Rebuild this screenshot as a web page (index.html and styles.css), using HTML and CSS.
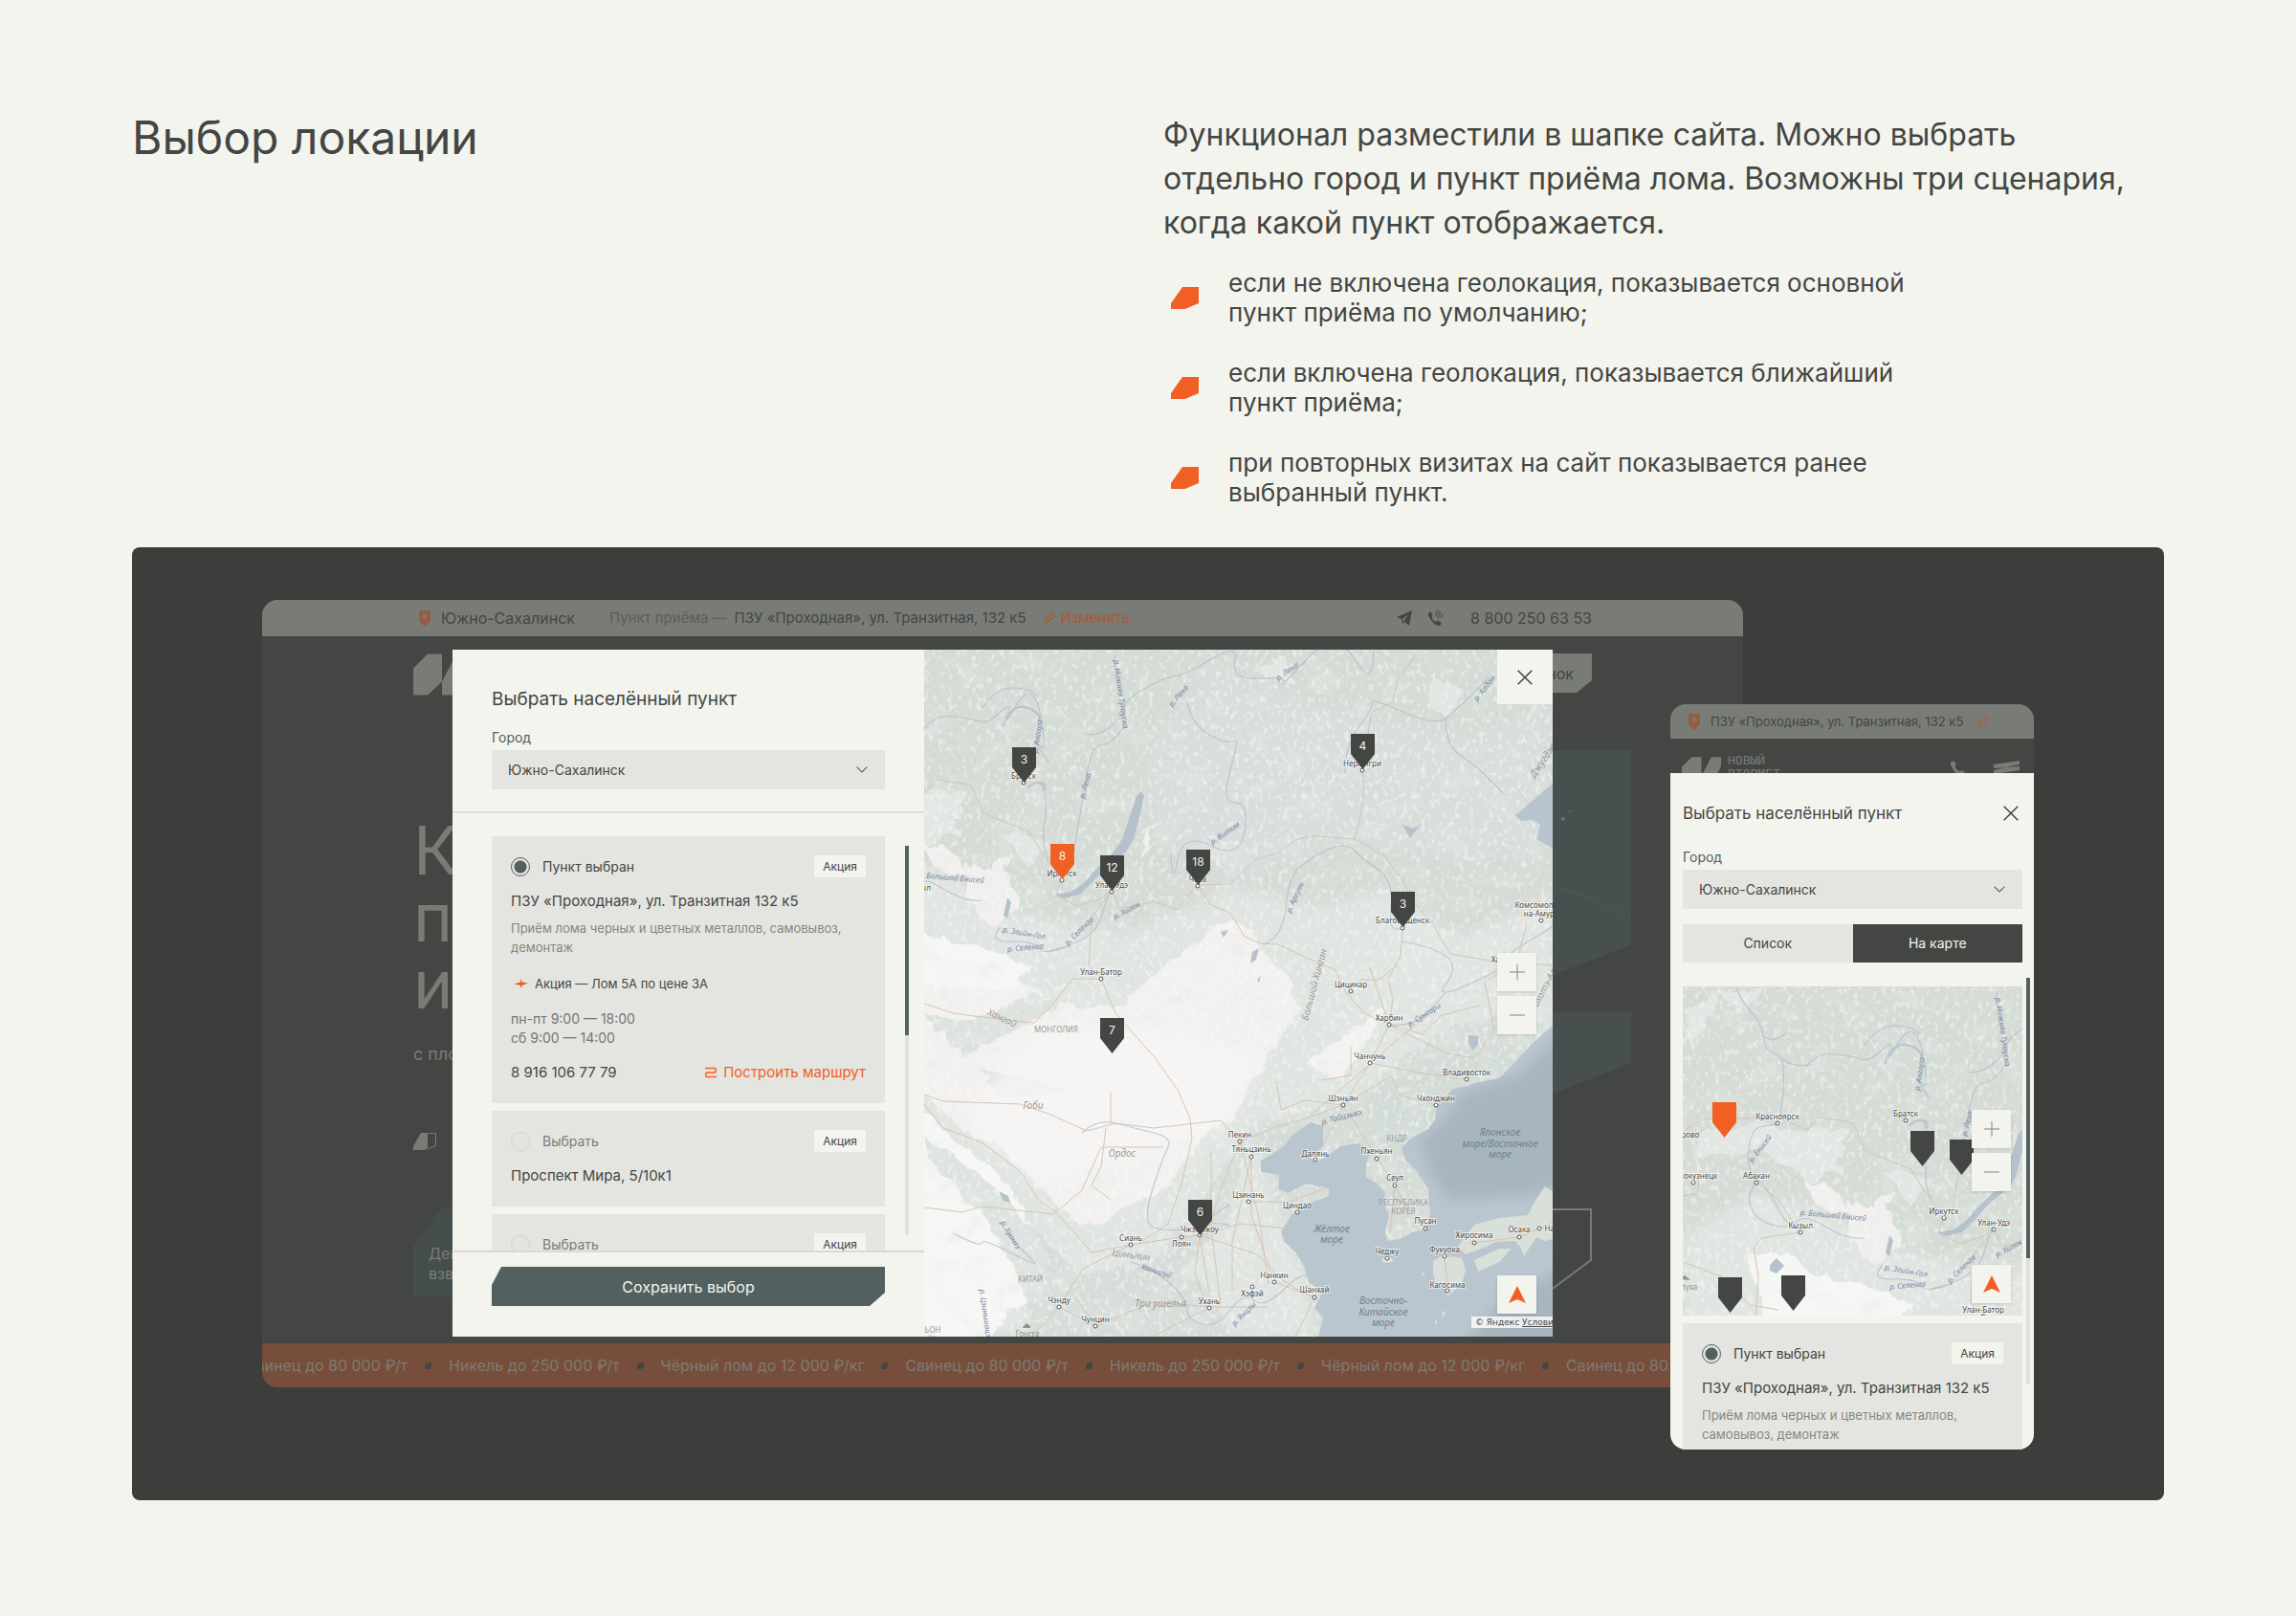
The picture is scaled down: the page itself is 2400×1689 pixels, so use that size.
FILE: index.html
```html
<!DOCTYPE html>
<html lang="ru">
<head>
<meta charset="utf-8">
<meta name="viewport" content="width=device-width, initial-scale=1">
<title>Выбор локации</title>
<link rel="stylesheet" href="styles.css">
</head>
<body>
<svg class="sprite" width="0" height="0" aria-hidden="true">
  <defs>
    <symbol id="i-geo" viewBox="0 0 12 17"><path fill-rule="evenodd" d="M2 0h8q2 0 2 2v9L6 17 0 11V2q0-2 2-2zM4 4v4h4V4z" fill="currentColor"/></symbol>
    <symbol id="i-pencil" viewBox="0 0 12 12"><path d="M1.200 10.800l.4-3.200L8 1.200q.8-.8 1.600 0l1.200 1.200q.8.800 0 1.600l-6.400 6.400z" fill="none" stroke="currentColor" stroke-width="1.400"/></symbol>
    <symbol id="i-close" viewBox="0 0 16 16"><path d="M.7.7l14.600 14.600M15.300.7L.7 15.300" stroke="currentColor" stroke-width="1.500" fill="none"/></symbol>
    <symbol id="i-down" viewBox="0 0 12 7"><path d="M.6.6L6 6 11.400.6" stroke="currentColor" stroke-width="1.100" fill="none"/></symbol>
    <symbol id="i-plus" viewBox="0 0 16 16"><path d="M8 0v16M0 8h16" stroke="currentColor" fill="none"/></symbol>
    <symbol id="i-minus" viewBox="0 0 16 16"><path d="M0 8h16" stroke="currentColor" fill="none"/></symbol>
    <symbol id="i-locate" viewBox="0 0 18 18"><path d="M9 0l9 18-9-4-9 4z" fill="currentColor"/></symbol>
    <symbol id="i-bullet" viewBox="0 0 29 23"><path d="M12 0h17v17L14.500 23H0v-6z" fill="currentColor"/></symbol>
    <symbol id="i-pin" viewBox="0 0 25 37"><path d="M0 0h25v21L12.500 37 0 21z" fill="currentColor"/></symbol>
    <symbol id="i-handset" viewBox="0 0 16 16"><path d="M3 0l3 4-1.500 2.500q1.500 3 4.500 5L11.500 10l4 3-1.500 3Q9 17 4 11T0 2z" fill="currentColor"/></symbol>
    <symbol id="i-logo" viewBox="0 0 60 43"><path d="M15 0h15v29L15 43H0V15zM45 0h15v14L45 43H30V29z" fill="currentColor"/></symbol>

    <filter id="rough" filterUnits="userSpaceOnUse" x="-129" y="-1" width="790" height="724">
      <feTurbulence type="fractalNoise" baseFrequency=".2 .14" numOctaves="3" seed="7" result="n"/>
      <feColorMatrix in="n" type="matrix" values="0 0 0 0 .93  0 0 0 0 .95  0 0 0 0 .93  6 0 0 0 -3.300"/>
      <feComposite operator="in" in2="SourceGraphic"/>
    </filter>
    <filter id="shade" filterUnits="userSpaceOnUse" x="-129" y="-1" width="790" height="724">
      <feTurbulence type="fractalNoise" baseFrequency=".03 .04" numOctaves="5" seed="12" result="n"/>
      <feColorMatrix in="n" type="matrix" values="0 0 0 0 .78  0 0 0 0 .83  0 0 0 0 .80  0 4 0 0 -2.100"/>
      <feComposite operator="in" in2="SourceGraphic"/>
    </filter>
    <filter id="soft" x="-10%" y="-10%" width="120%" height="120%"><feGaussianBlur stdDeviation="7"/></filter>
    <filter id="edge" filterUnits="userSpaceOnUse" x="-129" y="-1" width="790" height="724">
      <feTurbulence type="fractalNoise" baseFrequency=".06" numOctaves="4" seed="3"/>
      <feDisplacementMap in="SourceGraphic" scale="14" xChannelSelector="R" yChannelSelector="G"/>
    </filter>
    <path id="sea-shape" d="M657 393L636 411 618 431 601 448 575 453 568 456 553 459 536 476 534 491 527 501 508 511 499 521 503 533 514 544 527 564 529 591 524 606 510 609 497 616 484 618 482 608 486 591 480 578 482 568 473 558 462 551 462 538 467 524 454 516 436 519 421 529 409 536 404 531 417 518 417 498 404 494 384 508 376 519 352 534 352 546 371 549 371 564 380 568 399 558 423 563 423 571 397 581 384 591 373 608 376 618 389 631 397 644 402 661 417 671 408 688 417 698 412 719H658V393z"/>
    <clipPath id="sea-clip"><use href="#sea-shape"/></clipPath>

    <g id="region">
      <rect x="-129" y="-1" width="787" height="720" fill="#d5dbd5"/>
      <g filter="url(#soft)">
        <path fill="#d9dedc" d="M300 20L420 60 560 90 657 60V210L560 220 420 200 330 240 240 190 230 110z"/>
        <path fill="#e0e5e2" d="M-129 260L-60 220 20 230 80 270 200 300 330 250 420 270 480 250 560 300 657 260 657 400 500 440 420 480 340 500 400 660 410 718-129 718z"/>
      </g>
      <g filter="url(#edge)">
        <path fill="#f3f1f0" d="M320 284L345 300 365 330 385 345 390 380 370 410 345 450 325 490 300 500 285 520 255 560 215 580 190 600 165 600 140 580 115 555 80 520 40 500-5 460-5 300 40 310 60 340 100 345 140 370 200 375 240 340 290 300z"/>
        <path fill="#f3f2f0" d="M486 372L440 400 400 432 432 450 466 404z"/>
        <path fill="#f6f6f5" d="M-5 480L40 520 90 560 118 610 134 640 120 680 90 690 70 719-5 719zM-60 280L-20 275 10 300 60 310 110 330 90 360-40 345z"/>
        <path fill="#f1efee" d="M40 220l50 15 10 35-30 20-25-30zM-5 195l40 20 10 25-30-10zM240 180l-6 30-8 8 2-20zM60 240l30-30-12 40z"/>
        <path fill="#e2e7e4" d="M5 145l40 5-10 30-40-20zM-110 150l60-10 60 15 30 40-40 5-50-30-70 10zM80 190l50 10-20 30zM340 20l40-10 10 30zM530 30l30 10-10 30-25-10zM-129 30l40-25-30 60zM-90 5l50-5-30 25zM490 290l50 0 20 40-30 30-30-20z"/>
        <path fill="#d3dbd5" opacity=".7" d="M480 440l60-40 70-20 40 10-50 60-60 20-10 40-40 20-30-20zM0 380l50 10 60-30 40 10-60 30-50 25zM0 510l60 40 50 50 60 60 60-10 70-90 40-60-20 90-60 70-60 40-50-20-30 40-20-60-30-60-60-60zM60 440l100 20-80 10zM120 660l120-20 60 30 20 50H110z"/>
      </g>
      <rect x="-129" y="-1" width="787" height="720" filter="url(#shade)" opacity=".4"/>
      <rect x="-129" y="-1" width="787" height="720" filter="url(#rough)" opacity=".5"/>
      <path fill="#f7f6f5" opacity=".8" filter="url(#soft)" d="M120 400l120 0 70 10 40 20-40 70-80 20-110 40-70-60 20-50z"/>

      <!-- seas and lakes -->
      <use href="#sea-shape" fill="#bac6cf"/>
      <g clip-path="url(#sea-clip)">
        <path fill="#a7b5be" filter="url(#soft)" d="M680 390L620 445 560 465 545 490 518 512 530 550 550 575 640 570 680 550zM680 640L600 685 560 730H680z"/>
      </g>
      <path fill="#b9c5ce" d="M657 140L640 154 618 173 623 179 636 178 644 183 640 198 657 208z"/>
      <g fill="#d9dfd9">
        <path d="M532 639L543 632 562 636 566 648 562 664 547 676 543 661 538 668 532 654zM558 624L575 601 601 594 631 591 640 574 649 561 657 566V616L649 618 640 614 627 634 623 624 618 618 597 619 588 624 566 632zM575 638L601 626 614 626 601 640 579 650z"/>
        <ellipse cx="484" cy="638" rx="6" ry="3"/><path d="M541 690l4 4-3 5zM534 700l3 3-3 3zM520 650l4 3-3 2z"/>
      </g>
      <g fill="#b5c2cc">
        <path d="M227 148L230 153 226 171 219 198 211 211 193 224 176 243 163 256 146 260 137 256 154 253 167 244 180 229 196 214 207 198 217 168 222 153z"/>
        <path d="M87 259l4 5-4 17-4-3zM-38 290l7-7 8 8-8 8-7-3zM341 328l2-12 7-4-3 12zM569 403l10 1v9l-6 6-4-8zM348 345l4-4-2 7zM78 566l10 5 2 7-7-2zM310 295l8-2-5 8zM500 183l12 4 8-6-6 8-6 8z"/>
      </g>

      <!-- rivers -->
      <g fill="none" stroke="#b3bfcc" stroke-width="1.200" opacity=".8">
        <path d="M0 83Q10 68 30 70T58 75T80 65T85 72T95 60T122 70T120 100T130 118"/>
        <path stroke-width="2.500" d="M86 73Q92 58 105 60T122 74M108 145q4-6 12-6t6 8"/>
        <path d="M60 62Q75 40 92 40T118 48M122 140Q130 155 126 180T130 220M200 5Q197 15 203 25M168 88Q180 92 195 80T210 60T232 40T262 28T300 10T325 12T350 30T375 35T400 10T450 10T470 2M155 220Q165 160 170 130T185 100T210 80"/>
        <path d="M275 55Q280 80 300 90T325 95T320 125T325 160T335 190T300 205T265 220T258 215M440 130Q440 100 455 80T468 55T500 65T545 72T590 30M545 72Q545 100 560 110T585 130T605 150M355 308Q375 300 378 270T390 230T420 210T450 210T475 230T488 270T500 290M500 305Q530 310 545 320T545 350T590 340T620 320T640 300T657 270"/>
        <path d="M196 252Q190 260 188 270T180 290T150 310T120 312T90 305T80 290M130 315L150 310M486 392Q510 395 525 380T545 358M165 505Q180 490 200 495T240 505T255 520T240 560T235 600T288 605T310 600T320 580M80 600Q90 615 100 625T115 640T90 630T60 620T30 610M216 640Q245 650 260 665T275 690T290 705T320 690T345 680T380 665T410 672"/>
        <path d="M-73-1Q-68 15-58 25T-45 50T-40 65T-25 75T5 80M-25 75Q-22 100-25 120T-30 142T-45 145T-60 170T-52 200T-30 230T-10 245T20 250T60 262M-52 204Q-65 220-55 235T-20 250M-45 50Q-35 60-22 48"/>
      </g>

      <!-- roads -->
      <g fill="none" stroke="#d5c4b6" stroke-width="1">
        <path d="M-129 150L-108 138-31 136 2 149 12 136 49 141 62 171 109 190 132 225 144 240 138 257 160 268 185 260 196 252 205 270 220 268 240 263 265 272 275 258 286 246 320 245 345 220 370 212 390 198 410 195 450 198 480 215 500 240 510 262 530 285 550 318 590 325 657 330"/>
        <path d="M286 246L300 267 320 275 335 300 352 307 370 308 400 322 430 335 440 357 460 380 486 392 466 432 438 476 400 490 370 498 330 514"/>
        <path d="M515 5L495 30 490 55 468 65 462 100 458 125 460 145 455 180 450 198M500 290L498 320 485 345 490 365 486 392M455 345l20 0 20-15"/>
        <path d="M185 344L172 330 175 280 196 252M185 344L155 344 135 370 115 390 60 384 30 380 0 370M185 344L200 380 240 425 265 460 278 490 280 510 270 555 255 600M0 465L20 472 100 475 130 485 170 503 200 495 240 500 310 492 330 514M195 463v32M190 500l-5 40-10 20 20 15M0 475L20 500 60 515 100 545 120 575 140 590 175 630 216 622 269 614 288 612 330 600 380 605"/>
        <path d="M0 583L40 588 60 582 135 590 165 565 185 520 250 520M288 612l-5 40 15 40M288 612l10 60M300 525v80l10 80M330 514l-20 50-15 50M342 530v60l20 60 30 20M342 530l-20 90 0 50M342 577l40 0 40-15M330 514l20 80 10 70M216 622l-50 25-25 40 38 20 60-25 60 5 60 0M141 687l-30 32M179 707l-20-30M366 661l42 16-20 42M298 688l-60 30M288 612l60 20 30 30M255 600l-30 20"/>
        <path d="M438 476l36 56 18 28 10 20 22 25M492 560l-5 50M438 476l-40-5-25 10-5-30M486 392l35 10 20-20 40-10M466 432l50 10 51 7M466 432l60-50M486 392l-20-60M438 476l-29 57M438 476l50-30 10 20 37 10M400 490l70-60M575 620l47-6 35-15M544 634l20 0M547 665l-3-30M590 345l30-20 10-40M486 392l60 30 30 5 20-30-10-50M416 450l30-5 0-30"/>
        <path d="M-129 218l15-2 2-15M-52 204l25 20 20 32-40 6-8 10 5 30-3 50M-129 287l40 15 30 30 30 5"/>
      </g>

      <!-- towns -->
      <g class="town-dots">
        <circle cx="104" cy="139" r="2"/><circle cx="144" cy="241" r="2"/><circle cx="196" cy="253" r="2"/><circle cx="286" cy="247" r="2"/><circle cx="458" cy="126" r="2"/><circle cx="500" cy="291" r="2"/><circle cx="645" cy="283" r="2"/><circle cx="185" cy="344" r="2"/><circle cx="446" cy="357" r="2"/><circle cx="486" cy="392" r="2"/><circle cx="466" cy="432" r="2"/><circle cx="567" cy="449" r="2"/><circle cx="438" cy="476" r="2"/><circle cx="535" cy="476" r="2"/><circle cx="330" cy="514" r="2"/><circle cx="342" cy="530" r="2"/><circle cx="409" cy="533" r="2"/><circle cx="473" cy="532" r="2"/><circle cx="492" cy="560" r="2"/><circle cx="339" cy="577" r="2"/><circle cx="390" cy="588" r="2"/><circle cx="524" cy="605" r="2"/><circle cx="484" cy="636" r="2"/><circle cx="544" cy="634" r="2"/><circle cx="575" cy="620" r="2"/><circle cx="622" cy="614" r="2"/><circle cx="643" cy="605" r="2"/><circle cx="547" cy="670" r="2"/><circle cx="216" cy="622" r="2"/><circle cx="269" cy="614" r="2"/><circle cx="288" cy="612" r="2"/><circle cx="366" cy="661" r="2"/><circle cx="343" cy="666" r="2"/><circle cx="408" cy="677" r="2"/><circle cx="141" cy="687" r="2"/><circle cx="298" cy="688" r="2"/><circle cx="179" cy="707" r="2"/><circle cx="-30" cy="142" r="2"/><circle cx="-118" cy="204" r="2"/><circle cx="-52" cy="204" r="2"/><circle cx="-6" cy="256" r="2"/>
      </g>
      <g class="town">
        <text x="104" y="135">Братск</text><text x="144" y="237">Иркутск</text><text x="196" y="249">Улан-Удэ</text><text x="286" y="243">Чита</text><text x="458" y="122">Нерюнгри</text><text x="500" y="286">Благовещенск</text><text x="645" y="270">Комсомольск-</text><text x="645" y="279">на-Амуре</text><text x="185" y="340">Улан-Батор</text><text x="446" y="353">Цицикар</text><text x="613" y="327">Хабаровск</text><text x="486" y="388">Харбин</text><text x="466" y="428">Чанчунь</text><text x="567" y="445">Владивосток</text><text x="438" y="472">Шэньян</text><text x="535" y="472">Чхонджин</text><text x="330" y="510">Пекин</text><text x="342" y="525">Тяньцзинь</text><text x="409" y="530">Далянь</text><text x="473" y="527">Пхеньян</text><text x="492" y="555">Сеул</text><text x="339" y="573">Цзинань</text><text x="390" y="584">Циндао</text><text x="524" y="600">Пусан</text><text x="484" y="632">Чеджу</text><text x="544" y="630">Фукуока</text><text x="575" y="615">Хиросима</text><text x="622" y="609">Осака</text><text x="660" y="608">Нагоя</text><text x="547" y="667">Кагосима</text><text x="216" y="618">Сиань</text><text x="269" y="624">Лоян</text><text x="288" y="609">Чжэнчжоу</text><text x="366" y="657">Нанкин</text><text x="343" y="676">Хэфэй</text><text x="408" y="672">Шанхай</text><text x="141" y="683">Чэнду</text><text x="298" y="684">Ухань</text><text x="179" y="703">Чунцин</text><text x="-30" y="138">Красноярск</text><text x="-131" y="157">Кемерово</text><text x="-118" y="200">Новокузнецк</text><text x="-52" y="200">Абакан</text><text x="-6" y="252">Кызыл</text>
      </g>
      <g class="land">
        <text x="138" y="400">МОНГОЛИЯ</text><text x="494" y="514">КНДР</text><text x="501" y="581">РЕСПУБЛИКА</text><text x="501" y="590">КОРЕЯ</text><text x="111" y="661">КИТАЙ</text><text x="6" y="714">НЬОН</text>
      </g>
      <g class="green"><path d="M103 708l4-4 4 3v2h-8zM-133 305l6-4 5 4v1z" fill="#8a9a80"/><text x="108" y="718">Гонгга</text><text x="-127" y="316">Белуха</text></g>
      <g class="area">
        <text x="114" y="480">Гоби</text><text x="207" y="530">Ордос</text><text transform="translate(80 388) rotate(25)">Хангай</text><text transform="translate(411 351) rotate(-75)">Большой Хинган</text><text transform="translate(216 636) rotate(8)">Циньлин</text><text x="247" y="687">Три ущелья</text><text transform="translate(652 114) rotate(-56)">Джугджур</text><text transform="translate(654 350) rotate(-62)">Сихотэ-Алинь</text>
      </g>
      <g class="sea">
        <text x="602" y="508">Японское</text><text x="602" y="520">море/Восточное</text><text x="602" y="531">море</text><text x="426" y="609">Жёлтое</text><text x="426" y="620">море</text><text x="480" y="684">Восточно-</text><text x="480" y="696">Китайское</text><text x="480" y="707">море</text>
      </g>
      <g class="river">
        <text transform="translate(203 47) rotate(82)">р. Нижняя Тунгуска</text><text transform="translate(268 50) rotate(-50)">р. Лена</text><text transform="translate(381 25) rotate(-35)">р. Лена</text><text transform="translate(588 42) rotate(-52)">р. Алдан</text><text transform="translate(121 91) rotate(-82)">р. Ангара</text><text transform="translate(171 143) rotate(-75)">р. Лена</text><text transform="translate(316 194) rotate(-35)">р. Витим</text><text transform="translate(213 275) rotate(-28)">р. Хилок</text><text transform="translate(164 296) rotate(-45)">р. Селенга</text><text transform="translate(104 299) rotate(10)">р. Эгийн-Гол</text><text transform="translate(106 314) rotate(-5)">р. Селенга</text><text transform="translate(28 241) rotate(5)">р. Большой Енисей</text><text transform="translate(390 260) rotate(-66)">р. Аргунь</text><text transform="translate(524 384) rotate(-32)">р. Сунгари</text><text transform="translate(437 491) rotate(-14)">р. Тайцзыхэ</text><text transform="translate(88 613) rotate(60)">р. Хуанхэ</text><text transform="translate(242 652) rotate(18)">Ханьшуй</text><text transform="translate(336 696) rotate(-45)">р. Янцзы</text><text transform="translate(62 698) rotate(82)">р. Цзиньшацзян</text><text transform="translate(-46 170) rotate(-52)">р. Енисей</text>
      </g>
    </g>
  </defs>
</svg>

<main class="page">
  <header class="intro">
    <h1 class="intro-title">Выбор локации</h1>
    <div>
      <p class="lead">Функционал разместили в шапке сайта. Можно выбрать<br>отдельно город и пункт приёма лома. Возможны три сценария,<br>когда какой пункт отображается.</p>
      <ul class="cases">
        <li><svg><use href="#i-bullet"/></svg><span>если не включена геолокация, показывается основной<br>пункт приёма по умолчанию;</span></li>
        <li><svg><use href="#i-bullet"/></svg><span>если включена геолокация, показывается ближайший<br>пункт приёма;</span></li>
        <li><svg><use href="#i-bullet"/></svg><span>при повторных визитах на сайт показывается ранее<br>выбранный пункт.</span></li>
      </ul>
    </div>
  </header>

  <section class="stage">
    <div class="site">
      <div class="topbar">
        <svg class="ic-geo"><use href="#i-geo"/></svg>
        <a href="#city" class="tb-city">Южно-Сахалинск</a>
        <span class="tb-label">Пункт приёма —</span>
        <a href="#point" class="tb-point">ПЗУ «Проходная», ул. Транзитная, 132 к5</a>
        <a href="#change" class="tb-edit"><svg class="ic-pencil"><use href="#i-pencil"/></svg>Изменить</a>
        <a href="#tg" class="tb-tg" aria-label="Telegram"><svg width="16" height="16" viewBox="0 0 16 16"><path d="M16 0l-3 16-5-4-2 2-1-5L0 7zM12 4L6 9l1 3z" fill="currentColor" fill-rule="evenodd"/></svg></a>
        <a href="#call" class="tb-call" aria-label="Позвонить"><svg width="16" height="16" viewBox="0 0 16 16"><path d="M2 1l2.500 3.500L3.500 7q1 3 4 5l2.500-1.500 4 2.500-1.500 2.500Q8 17 3.500 11T0 3z" fill="currentColor"/><path d="M7 4.500q3 .5 4 4M7.500 2.500q4.500.5 5.500 5M8 .7q6 .3 7 6.300" stroke="currentColor" fill="none"/></svg></a>
        <a href="tel:88002506353" class="tb-phone">8 800 250 63 53</a>
      </div>

      <div class="hero">
        <div class="hero-head">
          <svg class="hero-logo"><use href="#i-logo"/></svg>
          <button type="button" class="hero-call">звонок</button>
        </div>
        <div class="hero-body">
          <div class="hero-text">
            <p class="hero-title">К<br>п<br>и</p>
            <p class="hero-sub">с пло</p>
            <svg class="hero-mark" width="24" height="18" viewBox="0 0 24 18"><path d="M8 0h7v15l-3 3H0v-4z" fill="currentColor"/><path d="M14 .5h9.500v13L14 17" fill="none" stroke="currentColor"/></svg>
            <p class="hero-note">Ден<br>взве</p>
          </div>
          <svg class="hero-art" width="300" height="571" viewBox="0 0 300 571">
            <path fill="#48504f" d="M0 0h300v204L218 235H0zM0 273h300v54l-82 32H0z"/>
            <path d="M218 143q45 10 82 33" stroke="#525a58" fill="none"/>
            <circle cx="229" cy="72" r="2" fill="#64706f"/><circle cx="236" cy="64" r="1" fill="#64706f"/>
            <path d="M100 480h158v53l-43 32" stroke="#797b77" stroke-width="2" fill="none"/>
          </svg>
        </div>
      </div>

      <div class="ticker">
        <span>Свинец до 80 000 ₽/т</span><i></i><span>Никель до 250 000 ₽/т</span><i></i><span>Чёрный лом до 12 000 ₽/кг</span><i></i><span>Свинец до 80 000 ₽/т</span><i></i><span>Никель до 250 000 ₽/т</span><i></i><span>Чёрный лом до 12 000 ₽/кг</span><i></i><span>Свинец до 80 000 ₽/т</span>
      </div>

      <div class="modal">
        <form class="pane">
          <div class="pane-head">
            <h2 class="pane-title">Выбрать населённый пункт</h2>
            <label class="field-label" for="city">Город</label>
            <div class="field"><select id="city"><option>Южно-Сахалинск</option></select><svg class="ic-down"><use href="#i-down"/></svg></div>
          </div>
          <div class="pane-list">
            <div class="cards">
              <article class="card">
                <div class="card-top"><label class="pick"><input type="radio" name="point" checked>Пункт выбран</label><span class="badge">Акция</span></div>
                <h3 class="card-title">ПЗУ «Проходная», ул. Транзитная 132 к5</h3>
                <p class="card-desc">Приём лома черных и цветных металлов, самовывоз, демонтаж</p>
                <p class="card-promo"><svg width="15" height="10" viewBox="0 0 15 10"><path d="M0 5.500L7 3.500V0l2 3.500 6 1L8.500 7v3L6 6.500z" fill="#f15f24"/></svg>Акция — Лом 5А по цене 3А</p>
                <p class="card-hours">пн-пт 9:00 — 18:00<br>сб 9:00 — 14:00</p>
                <div class="card-foot"><a href="tel:89161067779">8 916 106 77 79</a><a class="route" href="#route"><svg width="12" height="12" viewBox="0 0 12 12"><path d="M0 1.500h9.500q2 0 2 2.200T9.500 6h-7q-2 0-2 2.300T2.500 10.500H12" fill="none" stroke="currentColor" stroke-width="1.600"/></svg>Построить маршрут</a></div>
              </article>
              <article class="card">
                <div class="card-top"><label class="pick"><input type="radio" name="point">Выбрать</label><span class="badge">Акция</span></div>
                <h3 class="card-title">Проспект Мира, 5/10к1</h3>
              </article>
              <article class="card">
                <div class="card-top"><label class="pick"><input type="radio" name="point">Выбрать</label><span class="badge">Акция</span></div>
              </article>
            </div>
            <div class="scroll"><div class="scroll-thumb"></div></div>
          </div>
          <div class="pane-foot"><button type="button" class="save">Сохранить выбор</button></div>
        </form>

        <div class="map">
          <svg class="map-art" viewBox="0 0 657 718" preserveAspectRatio="xMidYMid slice"><use href="#region"/></svg>
          <button type="button" class="pin" style="left:104px;top:139px"><svg><use href="#i-pin"/></svg><span>3</span></button>
          <button type="button" class="pin" style="left:458px;top:125px"><svg><use href="#i-pin"/></svg><span>4</span></button>
          <button type="button" class="pin pin-active" style="left:144px;top:240px"><svg><use href="#i-pin"/></svg><span>8</span></button>
          <button type="button" class="pin" style="left:196px;top:252px"><svg><use href="#i-pin"/></svg><span>12</span></button>
          <button type="button" class="pin" style="left:286px;top:246px"><svg><use href="#i-pin"/></svg><span>18</span></button>
          <button type="button" class="pin" style="left:500px;top:290px"><svg><use href="#i-pin"/></svg><span>3</span></button>
          <button type="button" class="pin" style="left:196px;top:422px"><svg><use href="#i-pin"/></svg><span>7</span></button>
          <button type="button" class="pin" style="left:288px;top:612px"><svg><use href="#i-pin"/></svg><span>6</span></button>
          <button type="button" class="map-close" aria-label="Закрыть"><svg class="ic-16"><use href="#i-close"/></svg></button>
          <div class="map-zoom"><button type="button" class="tool" aria-label="Приблизить"><svg class="ic-16"><use href="#i-plus"/></svg></button><button type="button" class="tool" aria-label="Отдалить"><svg class="ic-16"><use href="#i-minus"/></svg></button></div>
          <button type="button" class="tool tool-locate" aria-label="Моё местоположение"><svg class="ic-18"><use href="#i-locate"/></svg></button>
          <div class="map-copy">© Яндекс <a href="#terms">Условия</a></div>
        </div>
      </div>
    </div>

    <div class="phone">
      <div class="phone-bar">
        <svg class="ic-geo"><use href="#i-geo"/></svg>
        <a href="#point">ПЗУ «Проходная», ул. Транзитная, 132 к5</a>
        <svg class="ic-pencil"><use href="#i-pencil"/></svg>
      </div>
      <div class="phone-head">
        <svg class="phone-logo"><use href="#i-logo"/></svg>
        <span class="phone-brand">НОВЫЙ<br>ВТОРМЕТ</span>
        <svg class="ic-16"><use href="#i-handset"/></svg>
        <svg width="27" height="22" viewBox="0 0 27 22"><path d="M0 4l27-4v4L12 7l15-1v4L0 14v-4l12-3-12 1z" fill="currentColor"/></svg>
      </div>
      <form class="sheet">
        <div class="sheet-head"><h2 class="sheet-title">Выбрать населённый пункт</h2><button type="button" class="sheet-close" aria-label="Закрыть"><svg class="ic-16"><use href="#i-close"/></svg></button></div>
        <label class="field-label" for="city-m">Город</label>
        <div class="field"><select id="city-m"><option>Южно-Сахалинск</option></select><svg class="ic-down"><use href="#i-down"/></svg></div>
        <div class="tabs"><button type="button">Список</button><button type="button" class="on">На карте</button></div>
        <div class="sheet-body">
          <div class="sheet-main">
            <div class="map map-small">
              <svg class="map-art" viewBox="-129 -1 355 344" preserveAspectRatio="xMidYMid slice"><use href="#region"/></svg>
              <button type="button" class="pin pin-active" style="left:43px;top:158px" aria-label="Пункт"><svg><use href="#i-pin"/></svg></button>
              <button type="button" class="pin" style="left:250px;top:188px" aria-label="Пункт"><svg><use href="#i-pin"/></svg></button>
              <button type="button" class="pin" style="left:291px;top:197px" aria-label="Пункт"><svg><use href="#i-pin"/></svg></button>
              <button type="button" class="pin" style="left:49px;top:341px" aria-label="Пункт"><svg><use href="#i-pin"/></svg></button>
              <button type="button" class="pin" style="left:115px;top:339px" aria-label="Пункт"><svg><use href="#i-pin"/></svg></button>
              <div class="map-zoom"><button type="button" class="tool" aria-label="Приблизить"><svg class="ic-16"><use href="#i-plus"/></svg></button><button type="button" class="tool" aria-label="Отдалить"><svg class="ic-16"><use href="#i-minus"/></svg></button></div>
              <button type="button" class="tool tool-locate" aria-label="Моё местоположение"><svg class="ic-18"><use href="#i-locate"/></svg></button>
            </div>
            <article class="card">
              <div class="card-top"><label class="pick"><input type="radio" name="point-m" checked>Пункт выбран</label><span class="badge">Акция</span></div>
              <h3 class="card-title">ПЗУ «Проходная», ул. Транзитная 132 к5</h3>
              <p class="card-desc">Приём лома черных и цветных металлов, самовывоз, демонтаж</p>
            </article>
          </div>
          <div class="scroll"><div class="scroll-thumb"></div></div>
        </div>
      </form>
    </div>
  </section>
</main>
</body>
</html>
```
FILE: styles.css
```css
:root {
  --paper: #f3f4ee;
  --ink: #444643;
  --panel: #3c3e3b;
  --muted: #797b77;
  --card: #e4e5e0;
  --steel: #526060;
  --accent: #f15f24;
}
* { box-sizing: border-box; }
body {
  margin: 0;
  background: var(--paper);
  color: var(--ink);
  font: 14px/20px Inter, "Open Sans", sans-serif;
}
h1, h2, h3, p, ul { margin: 0; padding: 0; font-weight: 400; }
a { color: inherit; text-decoration: none; }
button, select { font: inherit; color: inherit; border: 0; padding: 0; margin: 0; cursor: pointer; }
svg { display: block; flex: none; }
.sprite { position: absolute; }
.ic-geo { width: 12px; height: 17px; color: #965b40; }
.ic-pencil { width: 12px; height: 12px; }
.ic-16 { width: 16px; height: 16px; }
.ic-18 { width: 18px; height: 18px; }
.ic-down { width: 12px; height: 7px; color: var(--steel); }

.page { padding: 116px 138px 122px; }
.intro { display: grid; grid-template-columns: 1078fr 1046fr; margin-bottom: 42px; }
.intro-title { font-size: 48px; line-height: 56px; }
.lead { font-size: 32px; line-height: 46px; padding-top: 2px; white-space: nowrap; }
.cases { list-style: none; display: grid; gap: 32px; margin-top: 24px; font-size: 26px; line-height: 31px; }
.cases li { display: flex; align-items: center; gap: 31px; padding-left: 8px; }
.cases svg { width: 29px; height: 23px; color: var(--accent); }

.stage { display: flex; align-items: flex-start; padding: 55px 136px 53px; background: var(--panel); border-radius: 8px; }

.site { position: relative; flex: 1; min-width: 0; border-radius: 16px; overflow: hidden; background: var(--ink); }
.topbar { display: flex; align-items: center; height: 38px; padding: 0 158px 0 164px; background: var(--muted); font-size: 15px; white-space: nowrap; }
.tb-city, .tb-phone { font-size: 16px; }
.tb-city { margin: 0 36px 0 11px; }
.tb-label { color: #5c5e5a; margin-right: 8px; }
.tb-edit { display: flex; align-items: center; gap: 6px; margin-left: 18px; color: #a55a38; }
.tb-tg { margin-left: auto; }
.tb-call { margin: 0 28px 0 17px; }

.hero { padding: 18px 117px 49px 158px; color: var(--muted); }
.hero-head { display: flex; justify-content: space-between; margin-right: 41px; height: 44px; }
.hero-logo { width: 60px; height: 44px; }
.hero-call { width: 200px; height: 41px; padding-right: 19px; text-align: right; font-size: 16px; color: var(--ink); background: var(--muted); clip-path: polygon(0 0, 100% 0, 100% 28px, calc(100% - 16px) 100%, 0 100%); }
.hero-body { display: flex; justify-content: space-between; }
.hero-text { padding-top: 127px; }
.hero-title { font-size: 70px; line-height: 70px; }
.hero-sub { margin-top: 26px; font-size: 18px; line-height: 24px; }
.hero-mark { margin-top: 70px; }
.hero-note { margin-top: 60px; width: 200px; height: 93px; padding: 38px 16px 0; font-size: 16px; line-height: 21px; background: #454e4c; clip-path: polygon(29px 0, 100% 0, 100% 100%, 0 100%, 0 41px); }
.hero-art { margin-top: 57px; }

.ticker { display: flex; align-items: center; justify-content: center; gap: 18px; height: 46px; padding-right: 33px; background: #774e3b; color: #7f7a72; font-size: 16px; white-space: nowrap; overflow: hidden; }
.ticker i { width: 7px; height: 7px; background: var(--ink); border-radius: 4px 1px 4px 1px; flex: none; }

.modal { position: absolute; inset: 52px 199px 53px; display: grid; grid-template-columns: 493px 1fr; background: var(--paper); }
.pane { display: flex; flex-direction: column; color: var(--ink); min-height: 0; }
.pane-head { padding: 40px 41px 23px; border-bottom: 2px solid #dddfda; }
.pane-title { font-size: 19px; line-height: 24px; margin-bottom: 18px; }
.field-label { display: block; color: var(--steel); margin-bottom: 3px; }
.field { display: grid; align-items: center; }
.field > * { grid-area: 1 / 1; }
.field select { appearance: none; width: 100%; height: 41px; padding: 0 17px; background: var(--card); border-radius: 0; }
.field .ic-down { justify-self: end; margin-right: 18px; pointer-events: none; }
.pane-list { flex: 1; min-height: 0; display: flex; padding: 24px 16px 0 41px; gap: 21px; }
.cards { flex: 1; min-height: 0; display: flex; flex-direction: column; gap: 8px; overflow: hidden; }
.card { flex: none; padding: 20px; background: var(--card); }
.card-top { display: flex; justify-content: space-between; align-items: center; height: 23px; }
.pick { display: flex; align-items: center; gap: 13px; color: var(--muted); }
.pick:has(:checked) { color: var(--ink); }
.pick input { appearance: none; width: 20px; height: 20px; margin: 0; border: 1px solid #d0d2cd; border-radius: 50%; }
.pick input:checked { border-color: var(--steel); background: radial-gradient(circle, var(--steel) 6px, transparent 7px); }
.badge { height: 23px; padding: 0 9px; background: var(--paper); font-size: 12px; line-height: 23px; }
.card-title { margin-top: 13px; font-size: 15px; line-height: 24px; }
.card-desc { margin-top: 6px; font-size: 13px; color: #858783; }
.card-promo { display: flex; align-items: center; gap: 7px; margin-top: 18px; padding-left: 3px; font-size: 13px; }
.card-hours { margin-top: 17px; color: #747672; }
.card-foot { display: flex; justify-content: space-between; margin-top: 14px; font-size: 15px; line-height: 24px; }
.route { display: flex; align-items: center; gap: 7px; color: var(--accent); }
.scroll { width: 4px; margin: 10px 0 16px; background: #dfe0db; }
.scroll-thumb { height: 198px; background: var(--steel); }
.pane-foot { padding: 15px 41px 32px; border-top: 2px solid #d8dad5; }
.save { display: block; width: 100%; height: 41px; font-size: 16px; color: var(--paper); background: var(--steel); clip-path: polygon(10px 0, 100% 0, 100% 27px, calc(100% - 16px) 100%, 0 100%, 0 19px); }

.map { position: relative; overflow: hidden; }
.map-art { width: 100%; height: 100%; font-family: "Noto Sans", sans-serif; font-size: 8px; text-anchor: middle; }
.town-dots { fill: #fff; stroke: #555; stroke-width: 1px; }
.town { fill: #4a4a4a; stroke: #fff; stroke-width: 2px; stroke-opacity: .6; paint-order: stroke; }
.land { fill: #999; }
.green { fill: #8a9a80; }
.area { fill: #9d9a98; font-size: 10px; font-style: italic; }
.sea { fill: #6d7f90; font-size: 10px; font-style: italic; }
.river { fill: #7a84a5; font-size: 8px; font-style: italic; }
.pin { position: absolute; width: 25px; height: 37px; margin: -37px 0 0 -12px; background: none; color: var(--ink); display: grid; }
.pin > * { grid-area: 1 / 1; }
.pin svg { width: 25px; height: 37px; }
.pin span { color: var(--paper); font-size: 12px; line-height: 25px; }
.pin-active { color: var(--accent); }
.map-close { position: absolute; top: 0; right: 0; width: 58px; height: 57px; display: grid; place-items: center; background: var(--paper); }
.map-zoom { position: absolute; right: 17px; top: 317px; display: grid; gap: 5px; }
.tool { width: 41px; height: 40px; display: grid; place-items: center; background: var(--paper); color: #7b8583; box-shadow: 0 1px 3px rgb(0 0 0 / .15); }
.tool-locate { position: absolute; right: 17px; bottom: 24px; color: var(--accent); }
.map-copy { position: absolute; right: 0; bottom: 9px; width: 85px; padding-left: 4px; font: 9px/12px "DejaVu Sans", sans-serif; background: rgb(255 255 255 / .8); white-space: nowrap; overflow: hidden; }
.map-copy a { text-decoration: underline; }

.phone { position: relative; width: 380px; flex: none; margin: 109px 0 0 -76px; border-radius: 16px; overflow: hidden; background: var(--ink); }
.phone-bar { display: flex; align-items: center; gap: 11px; height: 36px; padding-left: 19px; background: var(--muted); font-size: 13px; white-space: nowrap; }
.phone-bar .ic-pencil { color: #a8603f; margin-left: 4px; }
.phone-head { display: flex; gap: 7px; height: 36px; padding: 19px 15px 0 12px; overflow: hidden; color: var(--muted); }
.phone-logo { width: 41px; height: 30px; }
.phone-brand { margin: -3px auto 0 0; font: 13px/14px "DejaVu Sans Mono", monospace; }
.phone-head .ic-16 { margin: 4px 22px 0 0; }
.phone-head svg:last-child { margin-top: 4px; }
.sheet { padding: 30px 4px 0 13px; background: var(--paper); }
.sheet > .field, .tabs, .sheet-head { margin-right: 8px; }
.sheet-head { display: flex; justify-content: space-between; padding-right: 4px; margin-bottom: 24px; }
.sheet-title { font-size: 17px; line-height: 24px; }
.sheet-close { width: 16px; height: 24px; display: grid; place-items: center; background: none; }
.tabs { display: grid; grid-template-columns: 1fr 1fr; margin-top: 16px; }
.tabs button { height: 40px; background: var(--card); }
.tabs .on { background: var(--ink); color: var(--paper); }
.sheet-body { display: flex; gap: 4px; padding-top: 16px; }
.sheet-main { flex: 1; min-width: 0; padding-top: 9px; }
.sheet-main .card { margin-top: 8px; padding-bottom: 6px; }
.map-small { height: 344px; }
.map-small .map-zoom { right: 12px; top: 129px; }
.map-small .tool-locate { right: 12px; bottom: 13px; }
.sheet-body .scroll { margin: 0 0 68px; }
.sheet-body .scroll-thumb { height: 293px; }
```
